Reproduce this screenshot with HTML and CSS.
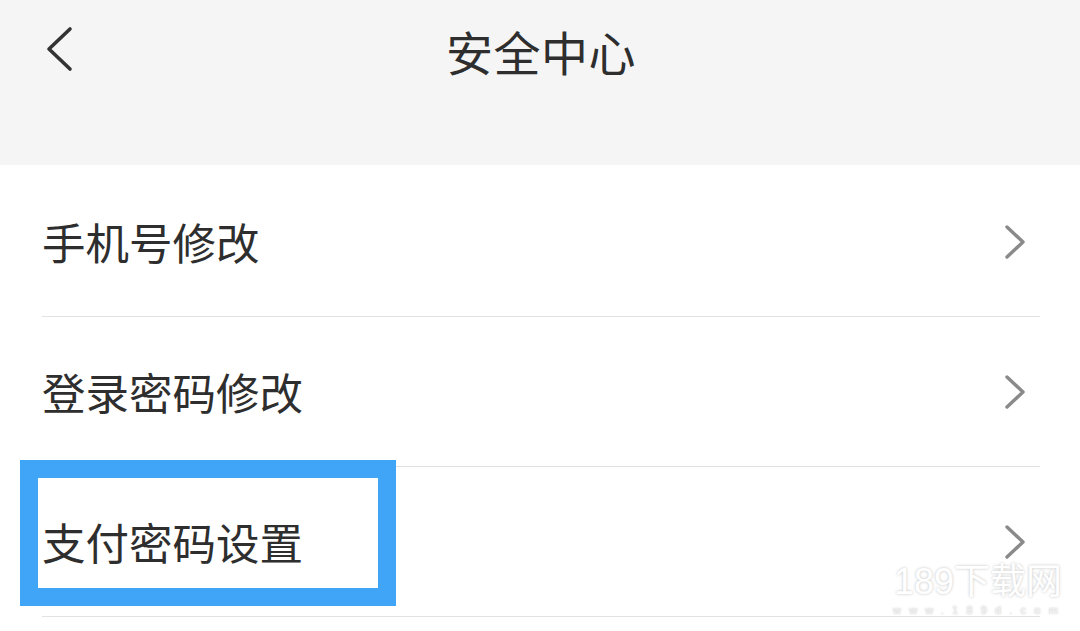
FILE: index.html
```html
<!DOCTYPE html>
<html lang="zh-CN">
<head>
<meta charset="utf-8">
<title>安全中心</title>
<link rel="stylesheet" href="styles.css">
</head>
<body>
<div class="page">
  <header class="header">
    <div class="topbar">
      <span class="back">
        <svg width="30" height="46" viewBox="0 0 30 46"><path d="M26 3 L5 23 L26 43" fill="none" stroke="#333" stroke-width="3.6" stroke-linecap="round" stroke-linejoin="round"/></svg>
      </span>
      <h1 class="title">安全中心</h1>
    </div>
  </header>
  <ul class="list">
    <li class="row"><span class="label">手机号修改</span><svg class="arrow" width="22" height="34" viewBox="0 0 22 34"><path d="M3 2 L19 17 L3 32" fill="none" stroke="#8a8a8a" stroke-width="3.4" stroke-linecap="round" stroke-linejoin="round"/></svg></li>
    <li class="row"><span class="label">登录密码修改</span><svg class="arrow" width="22" height="34" viewBox="0 0 22 34"><path d="M3 2 L19 17 L3 32" fill="none" stroke="#8a8a8a" stroke-width="3.4" stroke-linecap="round" stroke-linejoin="round"/></svg></li>
    <li class="row"><span class="label">支付密码设置</span><svg class="arrow" width="22" height="34" viewBox="0 0 22 34"><path d="M3 2 L19 17 L3 32" fill="none" stroke="#8a8a8a" stroke-width="3.4" stroke-linecap="round" stroke-linejoin="round"/></svg></li>
  </ul>
  <div class="highlight"></div>
  <div class="watermark">
    <div class="wm-big">189下载网</div>
    <div class="wm-small">www.189d.com</div>
  </div>
</div>
</body>
</html>
```
FILE: styles.css
```css
html, body {
  margin: 0;
  padding: 0;
  background: #ffffff;
}
body {
  font-family: "Noto Sans CJK SC", "Noto Sans", sans-serif;
  color: #333333;
}
.page {
  position: relative;
  width: 1080px;
  height: 631px;
  overflow: hidden;
  background: #ffffff;
}
.header {
  height: 165px;
  background: #f5f5f5;
}
.topbar {
  position: relative;
  height: 100px;
  display: flex;
  align-items: center;
  justify-content: center;
}
.back {
  position: absolute;
  left: 44px;
  top: 26px;
  width: 30px;
  height: 46px;
  display: flex;
}
.title {
  margin: 0;
  font-size: 47px;
  font-weight: 400;
  line-height: 1;
  color: #2e2e2e;
  letter-spacing: 0.5px;
  padding-left: 2px;
}
.list {
  list-style: none;
  margin: 0;
  padding: 2px 0 0 0;
}
.row {
  height: 149px;
  margin: 0 40px 0 42px;
  border-bottom: 1px solid #e2e2e2;
  display: flex;
  align-items: center;
  justify-content: space-between;
}
.label {
  font-size: 43.5px;
  line-height: 1;
  color: #2e2e2e;
  padding-left: 0;
}
.arrow {
  margin-right: 14px;
}
.highlight {
  position: absolute;
  left: 20px;
  top: 460px;
  width: 340px;
  height: 110px;
  border: 18px solid #40a5f6;
}
.watermark {
  position: absolute;
  left: 893px;
  top: 562px;
  width: 170px;
  text-align: center;
  color: #ffffff;
}
.wm-big {
  font-family: "Liberation Sans", "Noto Sans CJK SC", sans-serif;
  font-size: 36px;
  line-height: 40px;
  text-shadow: 0 0 3px rgba(0,0,0,0.25);
}
.wm-small {
  font-family: "Liberation Sans", sans-serif;
  font-size: 11px;
  line-height: 12px;
  letter-spacing: 8.2px;
  color: #f4f4f4;
  text-shadow: 0 0 2px rgba(0,0,0,0.3);
  margin-top: 2px;
}
```
